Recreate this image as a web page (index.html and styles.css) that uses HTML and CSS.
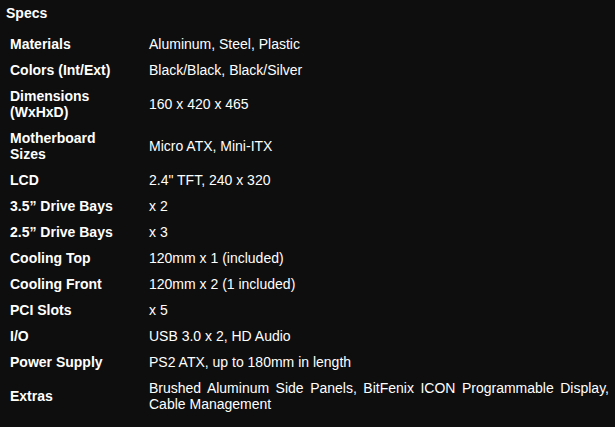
FILE: index.html
```html
<!DOCTYPE html>
<html>
<head>
  <title>Specs</title>
  <link rel="stylesheet" href="styles.css">
</head>
<body>
  <div class="specs">
    <h2>Specs</h2>
    <table class="spec-table">
      <tr><td class="label">Materials</td><td class="value">Aluminum, Steel, Plastic</td></tr>
      <tr><td class="label">Colors (Int/Ext)</td><td class="value">Black/Black, Black/Silver</td></tr>
      <tr><td class="label">Dimensions (WxHxD)</td><td class="value">160 x 420 x 465</td></tr>
      <tr><td class="label">Motherboard Sizes</td><td class="value">Micro ATX, Mini-ITX</td></tr>
      <tr><td class="label">LCD</td><td class="value">2.4" TFT, 240 x 320</td></tr>
      <tr><td class="label">3.5” Drive Bays</td><td class="value">x 2</td></tr>
      <tr><td class="label">2.5” Drive Bays</td><td class="value">x 3</td></tr>
      <tr><td class="label">Cooling Top</td><td class="value">120mm x 1 (included)</td></tr>
      <tr><td class="label">Cooling Front</td><td class="value">120mm x 2 (1 included)</td></tr>
      <tr><td class="label">PCI Slots</td><td class="value">x 5</td></tr>
      <tr><td class="label">I/O</td><td class="value">USB 3.0 x 2, HD Audio</td></tr>
      <tr><td class="label">Power Supply</td><td class="value">PS2 ATX, up to 180mm in length</td></tr>
      <tr><td class="label">Extras</td><td class="value">Brushed Aluminum Side Panels, BitFenix ICON Programmable Display, Cable Management</td></tr>
    </table>
  </div>
</body>
</html>
```

FILE: styles.css
```css
body {
  font-family: 'Liberation Sans', Arial, sans-serif;
  background-color: #0e0e0e;
  color: #fff;
  margin: 0;
  padding: 0;
}

.specs {
  padding: 5px 1px 0 5px;
}

.specs h2 {
  font-size: 14px;
  line-height: 16px;
  font-weight: bold;
  margin: 0 0 10px 1px;
}

.spec-table {
  width: 609px;
  table-layout: fixed;
  border-collapse: collapse;
  font-size: 14px;
  line-height: 16px;
}

.spec-table td {
  padding: 5px;
  vertical-align: middle;
}

.spec-table .label {
  width: 110px;
  padding-right: 24px;
  font-weight: bold;
}

.spec-table .value {
  text-align: justify;
}
```
